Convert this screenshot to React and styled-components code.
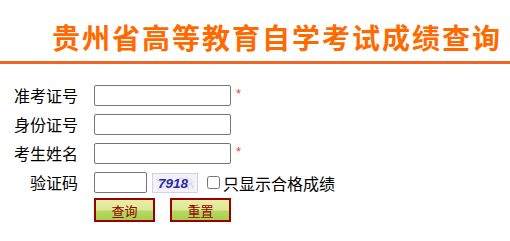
import React from "react";
import styled, { createGlobalStyle } from "styled-components";

const GlobalStyle = createGlobalStyle`
  body {
    margin: 0;
    background: #ffffff;
    font-family: "Noto Sans CJK SC", "Liberation Sans", sans-serif;
  }
`;

const Page = styled.div`
  width: 510px;
  height: 241px;
  overflow: hidden;
`;

const Header = styled.div`
  height: 61px;
  border-bottom: 3px solid #f26522;
  display: flex;
  justify-content: flex-end;
  align-items: flex-end;
  padding-right: 8px;
`;

const Title = styled.h1`
  margin: 0 0 7px 0;
  font-size: 28px;
  line-height: 34px;
  font-weight: bold;
  color: #ff6a00;
  letter-spacing: 2px;
  font-family: "Noto Sans CJK SC", sans-serif;
`;

const Form = styled.div`
  display: grid;
  grid-template-columns: 78px auto;
  column-gap: 16px;
  row-gap: 8px;
  padding: 21px 0 0 0;
`;

const Label = styled.label`
  font-size: 16px;
  line-height: 21px;
  color: #000;
  text-align: right;
  font-family: "Noto Sans CJK SC", sans-serif;
`;

const Field = styled.div`
  display: flex;
  align-items: center;
  gap: 5px;
  height: 21px;
`;

const Input = styled.input`
  box-sizing: border-box;
  width: ${({ $w }) => $w}px;
  height: 21px;
  border: 1px solid #767676;
  border-radius: 2px;
  padding: 1px 2px;
  margin: 0;
  font-size: 13px;
`;

const Star = styled.span`
  color: #ff3b2f;
  font-size: 13px;
  align-self: flex-start;
  margin-top: 1px;
  font-family: "Liberation Sans", sans-serif;
`;

const Captcha = styled.svg`
  display: block;
  width: 46px;
  height: 20px;
  border: 1px solid #d8cfdc;
  box-sizing: border-box;
  background: #f4f2f8;
`;

const CheckLabel = styled.label`
  display: flex;
  align-items: center;
  gap: 3px;
  font-size: 16px;
  margin-left: 4px;
  color: #000;
  font-family: "Noto Sans CJK SC", sans-serif;
`;

const Check = styled.input`
  width: 13px;
  height: 13px;
  margin: 0;
`;

const Buttons = styled.div`
  display: flex;
  gap: 15px;
  margin-top: -3px;
`;

const Button = styled.button`
  width: 61px;
  height: 24px;
  border: 2px solid #990000;
  background: linear-gradient(to bottom, #e6eea6 0%, #dce995 50%, #b5d862 55%, #a6d050 100%);
  color: #990000;
  font-size: 13px;
  font-family: "Noto Sans CJK SC", sans-serif;
  padding: 0;
  cursor: pointer;
`;

export default function App() {
  return (
    <Page>
      <GlobalStyle />
      <Header>
        <Title>贵州省高等教育自学考试成绩查询</Title>
      </Header>
      <Form>
        <Label>准考证号</Label>
        <Field>
          <Input $w={137} />
          <Star>*</Star>
        </Field>
        <Label>身份证号</Label>
        <Field>
          <Input $w={137} />
        </Field>
        <Label>考生姓名</Label>
        <Field>
          <Input $w={137} />
          <Star>*</Star>
        </Field>
        <Label>验证码</Label>
        <Field>
          <Input $w={53} />
          <Captcha viewBox="0 0 46 20">
            <path d="M2 6 L14 12 L30 4 L44 14" stroke="#c9c0d6" fill="none" strokeWidth="0.8" />
            <path d="M4 16 L20 10 L34 16 L44 8" stroke="#d6cce0" fill="none" strokeWidth="0.8" />
            <path d="M36 3 L38 18 M40 5 L43 17" stroke="#d0c8da" fill="none" strokeWidth="0.7" />
            <text x="4" y="15.5" fontSize="15" fontWeight="bold" fontStyle="italic" fill="#2a2aa8" fontFamily="Liberation Sans, sans-serif">
              7918
            </text>
          </Captcha>
          <CheckLabel>
            <Check type="checkbox" />
            只显示合格成绩
          </CheckLabel>
        </Field>
        <span />
        <Buttons>
          <Button>查询</Button>
          <Button>重置</Button>
        </Buttons>
      </Form>
    </Page>
  );
}
